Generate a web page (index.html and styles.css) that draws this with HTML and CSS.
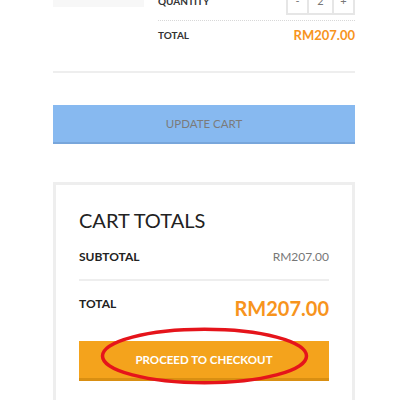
FILE: index.html
```
<!DOCTYPE html>
<html lang="en">
<head>
    <meta charset="UTF-8">
    <meta name="viewport" content="width=device-width, initial-scale=1.0">
    <title>Cart</title>
    <link rel="stylesheet" href="styles.css">
</head>
<body>
    <div class="page">
        <div class="cart-item">
            <div class="thumb"></div>
            <div class="details">
                <div class="qty-row">
                    <span class="label">Quantity</span>
                    <div class="qty">
                        <span class="qty-btn">-</span>
                        <span class="qty-val">2</span>
                        <span class="qty-btn">+</span>
                    </div>
                </div>
                <div class="item-total">
                    <span class="label">Total</span>
                    <span class="price">RM207.00</span>
                </div>
            </div>
        </div>

        <button class="update-btn">Update cart</button>

        <div class="totals">
            <h2>Cart totals</h2>
            <div class="totals-row subtotal">
                <span>Subtotal</span>
                <span class="amount">RM207.00</span>
            </div>
            <div class="totals-row grand">
                <span>Total</span>
                <span class="amount">RM207.00</span>
            </div>
            <div class="checkout-wrap">
                <button class="checkout-btn">Proceed to checkout</button>
                <svg class="circle" width="209" height="60" viewBox="0 0 209 60">
                    <ellipse cx="104.5" cy="30" rx="102" ry="26.75" fill="none" stroke="#e5141b" stroke-width="3.5"/>
                </svg>
            </div>
        </div>
    </div>
</body>
</html>
```

FILE: styles.css
```
body {
    margin: 0;
    font-family: Lato, "Open Sans", sans-serif;
    background: #fff;
    color: #222;
    overflow: hidden;
}
.page {
    width: 302px;
    margin-left: 53px;
}
.cart-item {
    display: flex;
    gap: 14px;
    margin-top: -14px;
    padding-bottom: 22px;
    border-bottom: 2px solid #eeeeee;
}
.thumb {
    width: 91px;
    height: 21px;
    background: #f7f7f7;
}
.details {
    flex: 1;
}
.label {
    font-size: 10px;
    font-weight: 700;
    text-transform: uppercase;
    color: #333;
}
.qty-row {
    display: flex;
    justify-content: space-between;
    align-items: center;
    height: 29px;
    padding-bottom: 5px;
    border-bottom: 1px dotted #d8d8d8;
}
.qty {
    display: flex;
    border: 2px solid #e6e6e6;
    height: 25px;
}
.qty span {
    display: flex;
    align-items: center;
    justify-content: center;
    font-size: 11px;
    color: #777;
}
.qty-btn {
    width: 19px;
}
.qty-val {
    width: 23px;
    border-left: 2px solid #e6e6e6;
    border-right: 2px solid #e6e6e6;
}
.item-total {
    display: flex;
    justify-content: space-between;
    align-items: center;
    height: 28px;
}
.price {
    color: #f7941d;
    font-size: 13px;
    font-weight: 700;
}
.update-btn {
    display: block;
    width: 100%;
    height: 39px;
    margin-top: 32px;
    background: #87b9f0;
    border: none;
    border-bottom: 2px solid #78a6db;
    color: #7b7b7b;
    font-family: inherit;
    font-size: 11.5px;
    text-transform: uppercase;
    padding: 0;
}
.totals {
    margin-top: 38px;
    border: 3px solid #eeeeee;
    padding: 23px 23px 40px;
}
.totals h2 {
    margin: 0 0 17px;
    font-size: 20px;
    font-weight: 400;
    text-transform: uppercase;
    color: #222;
}
.totals-row {
    display: flex;
    justify-content: space-between;
    align-items: center;
    font-size: 12px;
    font-weight: 700;
    text-transform: uppercase;
}
.subtotal {
    padding-bottom: 15px;
    border-bottom: 2px solid #eeeeee;
}
.subtotal .amount {
    font-weight: 400;
    color: #777;
}
.grand {
    align-items: flex-start;
    padding-top: 15px;
}
.grand .amount {
    font-size: 20px;
    color: #f7941d;
}
.checkout-wrap {
    position: relative;
    margin-top: 21px;
}
.checkout-btn {
    display: block;
    width: 100%;
    height: 40px;
    background: #f4a31c;
    border: none;
    border-bottom: 3px solid #d98f12;
    color: #fff;
    font-family: inherit;
    font-size: 11.5px;
    font-weight: 700;
    text-transform: uppercase;
    padding: 0;
}
.circle {
    position: absolute;
    left: 21px;
    top: -15px;
}
```
